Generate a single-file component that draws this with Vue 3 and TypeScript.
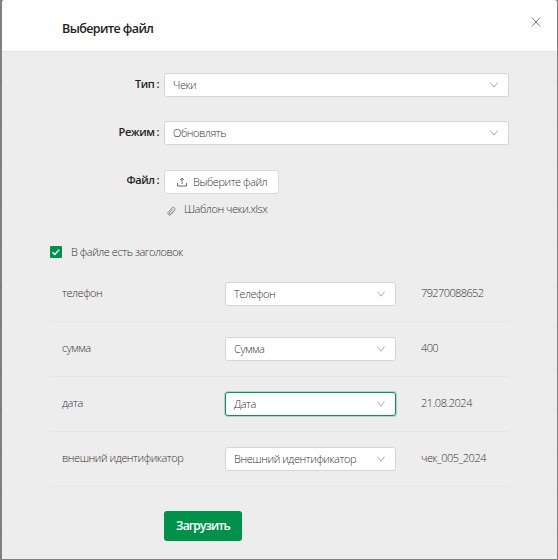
<script setup lang="ts">
import { ref } from 'vue';

interface Column {
  name: string;
  target: string;
  sample: string;
}

const fields = [
  { label: 'Тип', value: 'Чеки' },
  { label: 'Режим', value: 'Обновлять' },
];

const columns: Column[] = [
  { name: 'телефон', target: 'Телефон', sample: '79270088652' },
  { name: 'сумма', target: 'Сумма', sample: '400' },
  { name: 'дата', target: 'Дата', sample: '21.08.2024' },
  { name: 'внешний идентификатор', target: 'Внешний идентификатор', sample: 'чек_005_2024' },
];

const focused = ref('дата');
const hasHeader = ref(true);
</script>

<template>
  <div class="backdrop">
    <div class="modal">
      <header class="header">
        <h1 class="title">Выберите файл</h1>
        <button class="close" aria-label="Закрыть">
          <svg width="10" height="10" viewBox="0 0 10 10">
            <path d="M1 0.7 9 9.3M9 0.7 1 9.3" />
          </svg>
        </button>
      </header>

      <div class="body">
        <div v-for="field in fields" :key="field.label" class="field">
          <span class="label">{{ field.label }}<i class="colon">:</i></span>
          <div class="select">
            <span>{{ field.value }}</span>
            <svg class="arrow" width="8" height="6" viewBox="0 0 8 6">
              <path d="M0.5 0.5 4 5.2 7.5 0.5" />
            </svg>
          </div>
        </div>

        <div class="field field-file">
          <span class="label">Файл<i class="colon">:</i></span>
          <button class="upload">
            <svg width="10" height="10" viewBox="0 0 10 10">
              <path d="M0.5 6v3h9V6M5 7V1.2M3.2 3 5 1.1 6.8 3" />
            </svg>
            <span class="upload-text">Выберите файл</span>
          </button>
        </div>
        <div class="file">
          <svg width="9" height="10" viewBox="0 0 9 10">
            <path
              d="M7.6 4.5 4.3 8.2C2.3 10.3-.4 7.9 1.5 5.8L5 1.9C6.6.2 9 2.3 7.5 4L4.1 7.7C3 8.8 1.6 7.5 2.6 6.4L5.7 3"
            />
          </svg>
          <span class="file-name">Шаблон чеки.xlsx</span>
        </div>

        <div class="check" @click="hasHeader = !hasHeader">
          <span class="box" :class="{ checked: hasHeader }">
            <svg v-if="hasHeader" width="12" height="12" viewBox="0 0 12 12">
              <path d="M2.5 6.2 4.8 8.5 9.2 3.6" />
            </svg>
          </span>
          <span class="check-text">В файле есть заголовок</span>
        </div>

        <div class="columns">
          <div v-for="col in columns" :key="col.name" class="row">
            <div class="name">
              <span>{{ col.name }}</span>
            </div>
            <div class="select" :class="{ focused: focused === col.name }" @click="focused = col.name">
              <span>{{ col.target }}</span>
              <svg class="arrow" width="8" height="6" viewBox="0 0 8 6">
                <path d="M0.5 0.5 4 5.2 7.5 0.5" />
              </svg>
            </div>
            <div class="sample" :class="{ numeric: /^\d+$/.test(col.sample) }">
              <span>{{ col.sample }}</span>
            </div>
          </div>
        </div>

        <button class="submit">Загрузить</button>
      </div>
    </div>
  </div>
</template>

<style>
body {
  background: #808080;
}
</style>

<style scoped>
.backdrop {
  box-sizing: border-box;
  height: 560px;
  padding: 0 1px 1px 2px;
  background: repeating-linear-gradient(#808080 0 40px, #727272 40px 41px);
  font-family: 'Open Sans', 'Noto Sans', sans-serif;
  font-size: 11px;
  font-weight: 300;
  line-height: 16px;
  letter-spacing: -0.45px;
  color: #333;
}

.modal {
  height: 559px;
  border-radius: 3px 3px 0 0;
  background: #ededed;
  overflow: hidden;
}

.header {
  display: flex;
  justify-content: space-between;
  box-sizing: border-box;
  height: 52px;
  padding: 17px 16px 0 60px;
  border-bottom: 1px solid #e3e3e3;
  background: #fff;
}

.title {
  margin: 3px 0 0;
  font-size: 12.5px;
  font-weight: 600;
  line-height: 18px;
  letter-spacing: -0.6px;
  color: #222;
}

button {
  font: inherit;
  letter-spacing: inherit;
  cursor: pointer;
}

svg {
  flex: none;
  fill: none;
  stroke: #666;
}

.close {
  height: 10px;
  padding: 0;
  border: none;
  background: none;
  line-height: 0;
}

.close svg {
  stroke: #777;
}

.body {
  padding: 21px 48px 0;
}

.field {
  display: flex;
  height: 24px;
  margin-bottom: 24px;
}

.field-file {
  margin: 25px 0 0;
}

.field-file .label {
  padding-top: 2px;
}

.label {
  box-sizing: border-box;
  width: 114px;
  padding: 3px 5px 0 0;
  font-weight: 600;
  text-align: right;
  color: #222;
}

.colon {
  margin-left: 2px;
  font-style: normal;
}

.select {
  display: flex;
  flex: 1;
  align-items: center;
  justify-content: space-between;
  box-sizing: border-box;
  height: 24px;
  padding: 0 10px 0 8px;
  border: 1px solid #d5d5d5;
  border-radius: 3px;
  background: #fff;
}

.arrow {
  stroke: #b0b0b0;
}

.select.focused {
  border-color: #0b9650;
  box-shadow: 0 0 0 1px rgba(0, 145, 75, 0.25);
}

.upload {
  display: flex;
  align-items: center;
  box-sizing: border-box;
  width: 115px;
  height: 24px;
  padding: 0 0 0 12px;
  border: 1px solid #d9d9d9;
  border-radius: 3px;
  background: #fff;
  color: #333;
  white-space: nowrap;
}

.upload-text {
  margin-left: 6px;
}

.file {
  display: flex;
  align-items: center;
  height: 16px;
  margin: 7px 0 0 117px;
}

.file svg {
  margin-top: 4px;
  stroke: #777;
  stroke-width: 0.8;
}

.file-name {
  margin-left: 8px;
}

.check {
  display: flex;
  align-items: center;
  height: 16px;
  margin-top: 27px;
}

.box {
  width: 12px;
  height: 12px;
  border-radius: 1px;
  background: #fff;
}

.box svg {
  display: block;
  stroke: #fff;
  stroke-width: 1.3;
}

.box.checked {
  background: #00914b;
}

.check-text {
  margin-left: 9px;
}

.columns {
  margin-top: 7px;
}

.row {
  display: grid;
  grid-template-columns: 175px 171px 1fr;
  align-items: center;
  box-sizing: border-box;
  height: 55px;
  border-bottom: 1px solid #e4e4e4;
}

.name {
  padding-left: 12px;
}

.name,
.sample {
  padding-bottom: 2px;
}

.sample {
  padding-left: 25px;
}

.sample.numeric {
  letter-spacing: -0.6px;
}

.submit {
  display: block;
  width: 78px;
  height: 30px;
  margin: 24px 0 0 114px;
  padding: 0;
  border: none;
  border-radius: 3px;
  background: #00914b;
  color: #fff;
  font-size: 12px;
  font-weight: 600;
  letter-spacing: -0.85px;
}
</style>
